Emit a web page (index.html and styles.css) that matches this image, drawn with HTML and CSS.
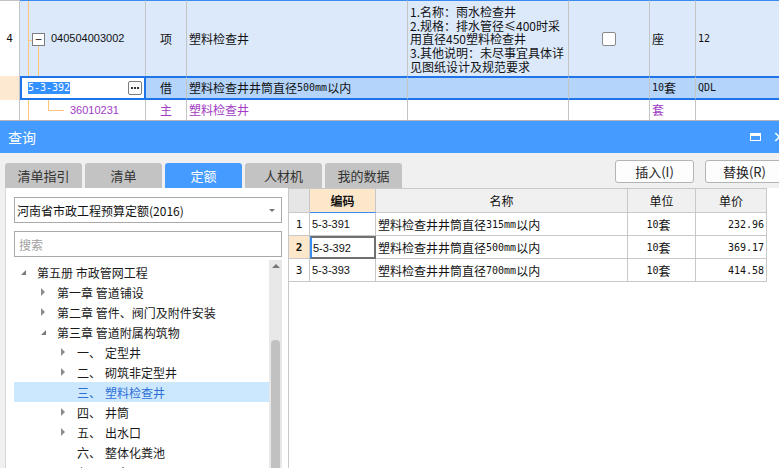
FILE: index.html
```html
<!DOCTYPE html>
<html lang="zh-CN">
<head>
<meta charset="utf-8">
<title>查询</title>
<link rel="stylesheet" href="styles.css">
</head>
<body>
<div class="top">
  <div class="c num r1n"><span class="m11">4</span></div>
  <div class="c r1 code1"><span class="tl tl-v"></span><span class="tl tl-h"></span><span class="tl tl-v2"></span><span class="box">−</span><span class="s11">040504003002</span></div>
  <div class="c r1 ctr">项</div>
  <div class="c r1 pl">塑料检查井</div>
  <div class="c r1 desc"><div class="ln">1.名称：雨水检查井</div><div class="ln">2.规格：排水管径≤400时采</div><div class="ln">用直径450塑料检查井</div><div class="ln">3.其他说明：未尽事宜具体详</div><div class="ln">见图纸设计及规范要求</div></div>
  <div class="c r1 ctr"><span class="chk"></span></div>
  <div class="c r1 pl">座</div>
  <div class="c r1 pl"><span class="m">12</span></div>

  <div class="c num r2n"></div>
  <div class="c r2 edit"><span class="sel m">5-3-392</span><span class="dots"><i></i><i></i><i></i></span></div>
  <div class="c r2 ctr">借</div>
  <div class="c r2 pl">塑料检查井井筒直径<span class="m">500mm</span>以内</div>
  <div class="c r2"></div>
  <div class="c r2"></div>
  <div class="c r2 pl"><span class="m">10</span>套</div>
  <div class="c r2 pl"><span class="m">QDL</span></div>

  <div class="c num"></div>
  <div class="c r3 code3"><span class="tl tl-v"></span><span class="tl tl-lv"></span><span class="tl tl-lh"></span><span class="s11">36010231</span></div>
  <div class="c r3 ctr purple">主</div>
  <div class="c r3 pl purple">塑料检查井</div>
  <div class="c r3"></div>
  <div class="c r3"></div>
  <div class="c r3 pl purple">套</div>
  <div class="c r3"></div>
</div>

<div class="dialog">
  <div class="dlg-head">
    <span class="title">查询</span>
    <span class="hicons"><span class="maxi"></span><span class="close">×</span></span>
  </div>
  <div class="dlg-body">
    <div class="toolbar">
      <div class="tabs">
        <div class="tab">清单指引</div>
        <div class="tab">清单</div>
        <div class="tab active">定额</div>
        <div class="tab">人材机</div>
        <div class="tab">我的数据</div>
      </div>
      <div class="btns">
        <div class="btn">插入(I)</div>
        <div class="btn">替换(R)</div>
      </div>
    </div>
    <div class="panes">
      <div class="left">
        <div class="select"><span>河南省市政工程预算定额(2016)</span><span class="caret"></span></div>
        <div class="search">搜索</div>
        <div class="tree">
          <div class="rows">
            <div class="row l0"><span class="tri open"></span><span>第五册 市政管网工程</span></div>
            <div class="row l1"><span class="tri closed"></span><span>第一章 管道铺设</span></div>
            <div class="row l1"><span class="tri closed"></span><span>第二章 管件、阀门及附件安装</span></div>
            <div class="row l1"><span class="tri open"></span><span>第三章 管道附属构筑物</span></div>
            <div class="row l2"><span class="tri closed"></span><span class="ord">一、</span><span>定型井</span></div>
            <div class="row l2"><span class="tri closed"></span><span class="ord">二、</span><span>砌筑非定型井</span></div>
            <div class="row l2 hl"><span class="tri"></span><span class="ord">三、</span><span>塑料检查井</span></div>
            <div class="row l2"><span class="tri closed"></span><span class="ord">四、</span><span>井筒</span></div>
            <div class="row l2"><span class="tri closed"></span><span class="ord">五、</span><span>出水口</span></div>
            <div class="row l2"><span class="tri"></span><span class="ord">六、</span><span>整体化粪池</span></div>
            <div class="row l2"><span class="tri closed"></span><span class="ord">七、</span><span>雨水口</span></div>
          </div>
          <div class="sbar"><span class="up"></span><span class="thumb"></span></div>
        </div>
      </div>
      <div class="right">
        <div class="tbl">
          <div class="h hn"></div>
          <div class="h hsel">编码</div>
          <div class="h">名称</div>
          <div class="h">单位</div>
          <div class="h">单价</div>

          <div class="d dn"><span class="m11">1</span></div>
          <div class="d"><span class="s11">5-3-391</span></div>
          <div class="d">塑料检查井井筒直径<span class="m">315mm</span>以内</div>
          <div class="d dc"><span class="m">10</span>套</div>
          <div class="d dr"><span class="m">232.96</span></div>

          <div class="d dn cur"><span class="m11">2</span></div>
          <div class="d csel"><span class="s11">5-3-392</span></div>
          <div class="d">塑料检查井井筒直径<span class="m">500mm</span>以内</div>
          <div class="d dc"><span class="m">10</span>套</div>
          <div class="d dr"><span class="m">369.17</span></div>

          <div class="d dn"><span class="m11">3</span></div>
          <div class="d"><span class="s11">5-3-393</span></div>
          <div class="d">塑料检查井井筒直径<span class="m">700mm</span>以内</div>
          <div class="d dc"><span class="m">10</span>套</div>
          <div class="d dr"><span class="m">414.58</span></div>
        </div>
      </div>
    </div>
  </div>
</div>
</body>
</html>
```

FILE: styles.css
```css
* { box-sizing: border-box; }
html, body { margin: 0; padding: 0; }
body {
  width: 779px;
  height: 468px;
  overflow: hidden;
  background: #f0f0f0;
  font-family: "Noto Sans CJK SC", "Noto Sans", sans-serif;
  font-size: 12px;
  color: #111;
  display: flex;
  flex-direction: column;
}

.m { font-family: "DejaVu Sans Mono", monospace; font-size: 10px; }
.m11 { font-family: "DejaVu Sans Mono", monospace; font-size: 11px; }
.s11 { font-family: "Liberation Sans", sans-serif; font-size: 11px; }

/* top grid */
.top {
  display: grid;
  grid-template-columns: 20px 126px 41px 221px 161px 81px 46px 83px;
  grid-template-rows: 76px 24px 20px;
  background: #fff;
  border-bottom: 1px solid #b4b4b4;
  flex: none;
}
.c {
  border-right: 1px solid #c4c4c4;
  display: flex;
  align-items: center;
  white-space: nowrap;
  overflow: hidden;
  position: relative;
  line-height: 1;
}
.c:nth-child(8n) { border-right: none; }
.num { justify-content: center; background: #fff; }
.r1n { border-top: 1px solid #c4c4c4; }
.r1 { background: #dce9fb; border-top: 1px solid #3a8cf0; }
.r2n { background: #fde9d2; }
.r2 { background: #b4d4fb; border-top: 2px solid #1f74e8; border-bottom: 2px solid #1f74e8; }
.r3 { background: #fff; }
.ctr { justify-content: center; }
.pl { padding-left: 2px; }
.purple { color: #a23cc4; }
.desc {
  flex-direction: column;
  align-items: flex-start;
  padding: 4px 0 0 2px;
}
.ln { height: 13.7px; line-height: 13.7px; font-size: 12px; }
.chk {
  width: 14px; height: 14px;
  border: 1px solid #8a8a8a;
  border-radius: 2px;
  background: #fff;
}

.code1 { padding-left: 12px; gap: 6px; }
.box {
  width: 13px; height: 13px;
  border: 1px solid #7d7d7d;
  background: #fff;
  display: flex; align-items: center; justify-content: center;
  font-size: 12px; line-height: 1;
  color: #222;
  position: relative;
  z-index: 1;
  margin-top: 1px;
}
.tl { position: absolute; background: #ffc57a; }
.tl-v { left: 8px; top: 0; bottom: 0; width: 1px; }
.tl-h { left: 8px; top: 39px; width: 5px; height: 1px; }
.tl-v2 { left: 18px; top: 45px; bottom: 0; width: 1px; }
.code3 { padding-left: 50px; color: #a23cc4; }
.tl-lv { left: 28px; top: 0; height: 11px; width: 1px; }
.tl-lh { left: 28px; top: 10px; width: 16px; height: 1px; }

.edit {
  background: #fff;
  border-left: 2px solid #1f74e8;
  border-right: 2px solid #1f74e8;
  justify-content: space-between;
  padding: 0 2px 0 6px;
}
.sel { background: #3390ff; color: #fff; padding: 1px 0; }
.dots {
  width: 14px; height: 14px;
  border: 1px solid #7d7d7d;
  border-radius: 2px;
  background: #fafafa;
  display: flex; align-items: center; justify-content: center;
  gap: 1px;
}
.dots i {
  width: 2px; height: 2px;
  background: #333;
}

/* dialog */
.dialog { flex: 1; display: flex; flex-direction: column; min-height: 0; }
.dlg-head {
  height: 32px;
  background: #459bff;
  color: #fff;
  display: flex;
  align-items: center;
  justify-content: space-between;
  padding-left: 8px;
  flex: none;
}
.title { font-size: 14px; }
.hicons { display: flex; align-items: center; gap: 12px; margin-right: -7px; }
.maxi {
  width: 11px; height: 8px;
  border: 1.5px solid #fff;
  border-top-width: 3px;
}
.close { font-size: 16px; line-height: 1; font-family: "DejaVu Sans", sans-serif; }

.dlg-body { flex: 1; display: flex; flex-direction: column; min-height: 0; }
.toolbar {
  height: 35px;
  display: flex;
  justify-content: space-between;
  padding-left: 5px;
  flex: none;
}
.tabs { display: flex; align-items: flex-end; gap: 3px; }
.tab {
  width: 77px; height: 25px;
  background: #c3c3c3;
  border-radius: 3px 3px 0 0;
  display: flex; align-items: center; justify-content: center;
  font-size: 13px; color: #333;
}
.tab.active { background: #459bff; color: #fff; }
.btns { display: flex; gap: 11px; padding-top: 7px; margin-right: -5px; }
.btn {
  width: 79px; height: 23px;
  border: 1px solid #b4b4b4;
  border-radius: 3px;
  background: #fdfdfd;
  display: flex; align-items: center; justify-content: center;
  font-size: 13px; color: #222;
}

.panes { flex: 1; display: flex; min-height: 0; padding-left: 5px; }
.left {
  width: 283px;
  background: #fff;
  border-left: 1px solid #d6d6d6;
  padding: 9px 6px 0 8px;
  display: flex;
  flex-direction: column;
}
.select {
  height: 26px;
  border: 1px solid #a9a9a9;
  display: flex;
  align-items: center;
  justify-content: space-between;
  padding: 0 6px 0 2px;
  font-size: 12px;
  color: #111;
}
.caret {
  width: 0; height: 0;
  border-left: 3px solid transparent;
  border-right: 3px solid transparent;
  border-top: 3px solid #777;
}
.search {
  height: 26px;
  margin-top: 8px;
  border: 1px solid #a9a9a9;
  display: flex; align-items: center;
  padding-left: 4px;
  color: #a0a0a0;
  font-size: 12px;
}
.tree { flex: 1; display: flex; margin-top: 3px; min-height: 0; }
.rows { flex: 1; padding-top: 2px; overflow: hidden; }
.row {
  height: 20px;
  display: flex;
  align-items: center;
  white-space: nowrap;
  color: #1a1a1a;
  font-size: 12px;
}
.row.l0 { padding-left: 7px; }
.row.l1 { padding-left: 27px; }
.row.l2 { padding-left: 47px; }
.row.hl { background: #cce8ff; color: #2f6fd6; }
.tri { width: 10px; height: 8px; margin-right: 6px; position: relative; flex: none; }
.tri.closed::before {
  content: "";
  position: absolute; left: 0; top: 0;
  border-top: 4px solid transparent;
  border-bottom: 4px solid transparent;
  border-left: 4px solid #8c8c8c;
}
.tri.open::before {
  content: "";
  position: absolute; left: 0; top: 2px;
  border-left: 5px solid transparent;
  border-bottom: 5px solid #7a7a7a;
}
.ord { width: 28px; }
.sbar {
  width: 13px;
  background: #e8e8e8;
  display: flex;
  flex-direction: column;
  align-items: center;
}
.up {
  margin-top: 4px;
  width: 0; height: 0;
  border-left: 4px solid transparent;
  border-right: 4px solid transparent;
  border-bottom: 4px solid #777;
}
.thumb {
  margin-top: 72px;
  width: 9px;
  flex: 1;
  background: #c1c1c1;
  border-radius: 4px 4px 0 0;
}

.right { flex: 1; background: #fff; border-left: 1px solid #c8c8c8; }
.tbl {
  display: grid;
  grid-template-columns: 21px 66px 252px 68px 71px;
  grid-template-rows: 24px 23px 23px 23px;
  width: 478px;
  border-top: 1px solid #c8c8c8;
}
.h, .d {
  border-right: 1px solid #c8c8c8;
  border-bottom: 1px solid #c8c8c8;
  display: flex;
  align-items: center;
  white-space: nowrap;
  overflow: hidden;
}
.h { background: #f0f0f0; justify-content: center; font-size: 12px; color: #111; }
.hn { background: #e6e6e6; }
.hsel { background: #fde7ca; font-weight: bold; border-bottom: 1px solid #3a8cf0; }
.d { padding-left: 2px; background: #fff; }
.dn { justify-content: center; padding-left: 0; }
.dn.cur { background: #fde7ca; font-weight: bold; }
.dc { justify-content: center; padding-right: 8px; }
.dr { justify-content: flex-end; padding-right: 2px; }
.csel {
  border: 2px solid #707070;
  border-left: 2px solid #3a8cf0;
  padding-left: 1px;
}
```
